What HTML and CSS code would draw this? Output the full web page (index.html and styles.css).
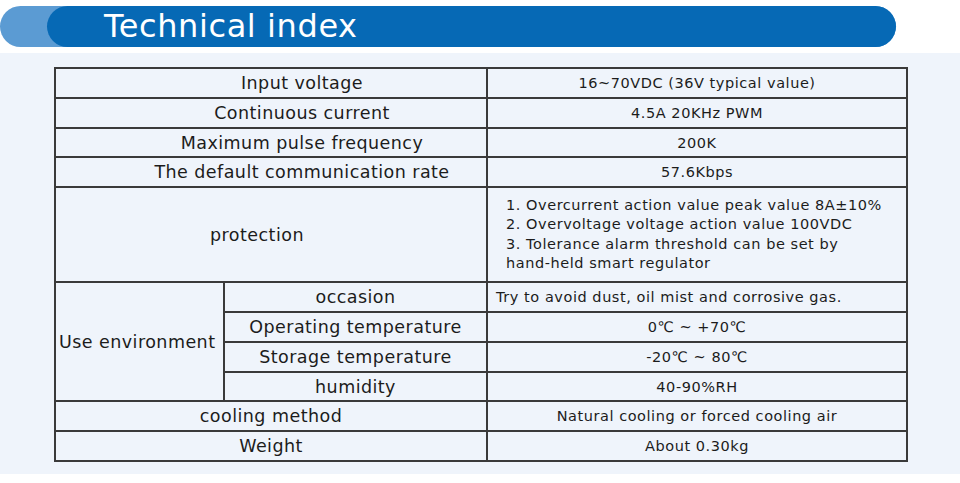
FILE: index.html
```html
<!DOCTYPE html>
<html lang="en">
<head>
<meta charset="utf-8">
<title>Technical index</title>
<link rel="stylesheet" href="styles.css">
</head>
<body>
<header class="banner">
  <div class="pill"><h1 class="title">Technical index</h1></div>
</header>
<section class="panel">
  <table class="spec">
    <colgroup>
      <col class="c-a">
      <col class="c-b">
      <col class="c-c">
    </colgroup>
    <tr class="r"><td colspan="2" class="k k-top">Input voltage</td><td class="v">16~70VDC (36V typical value)</td></tr>
    <tr class="r"><td colspan="2" class="k k-top">Continuous current</td><td class="v">4.5A 20KHz PWM</td></tr>
    <tr class="r r-short"><td colspan="2" class="k k-top">Maximum pulse frequency</td><td class="v">200K</td></tr>
    <tr class="r"><td colspan="2" class="k k-top">The default communication rate</td><td class="v">57.6Kbps</td></tr>
    <tr class="r-tall"><td colspan="2" class="k k-prot">protection</td><td class="v v-list">1. Overcurrent action value peak value 8A±10%<br>2. Overvoltage voltage action value 100VDC<br>3. Tolerance alarm threshold can be set by<br>hand-held smart regulator</td></tr>
    <tr class="r"><td rowspan="4" class="k k-env">Use environment</td><td class="k">occasion</td><td class="v v-left">Try to avoid dust, oil mist and corrosive gas.</td></tr>
    <tr class="r"><td class="k">Operating temperature</td><td class="v">0℃ ~ +70℃</td></tr>
    <tr class="r"><td class="k">Storage temperature</td><td class="v">-20℃ ~ 80℃</td></tr>
    <tr class="r r-short"><td class="k">humidity</td><td class="v">40-90%RH</td></tr>
    <tr class="r"><td colspan="2" class="k">cooling method</td><td class="v">Natural cooling or forced cooling air</td></tr>
    <tr class="r"><td colspan="2" class="k">Weight</td><td class="v">About 0.30kg</td></tr>
  </table>
</section>
</body>
</html>
```
FILE: styles.css
```css
html, body {
  margin: 0;
  padding: 0;
  background: #ffffff;
}
body {
  width: 960px;
  height: 483px;
  overflow: hidden;
  font-family: "DejaVu Sans", "Open Sans", sans-serif;
  color: #1c1c1c;
}
.banner {
  margin: 6px 64px 0 0;
  background: #5b9bd3;
  border-radius: 21px;
}
.pill {
  margin-left: 47px;
  height: 41px;
  background: #0669b5;
  border-radius: 21px;
  display: flex;
  align-items: center;
  padding-left: 57px;
}
.title {
  margin: 0;
  font-weight: 400;
  font-size: 32px;
  line-height: 41px;
  letter-spacing: 0.6px;
  color: #ffffff;
}
.panel {
  margin-top: 6px;
  height: 421px;
  box-sizing: border-box;
  padding: 14px 0 0 54px;
  background: #eff4fb;
}
.spec {
  width: 852px;
  table-layout: fixed;
  border-collapse: collapse;
}
.c-a { width: 169px; }
.c-b { width: 263px; }
.c-c { width: 420px; }
.spec td {
  border: 2px solid #3a3a3a;
  padding: 0;
  text-align: center;
  vertical-align: middle;
}
.r { height: 30px; }
.spec .r-short { height: 29px; }
.r-tall { height: 95px; }
.spec .k {
  font-size: 17.5px;
  letter-spacing: 0.45px;
}
.spec .k-top { padding-left: 62px; }
.spec .k-prot { padding-right: 28px; }
.spec .k-env { text-align: left; padding-left: 3px; }
.spec .v {
  font-size: 14.5px;
  letter-spacing: 0.55px;
}
.spec .v-list {
  text-align: left;
  padding-left: 18px;
  line-height: 19.5px;
}
.spec .v-left {
  text-align: left;
  padding-left: 8px;
}
```
